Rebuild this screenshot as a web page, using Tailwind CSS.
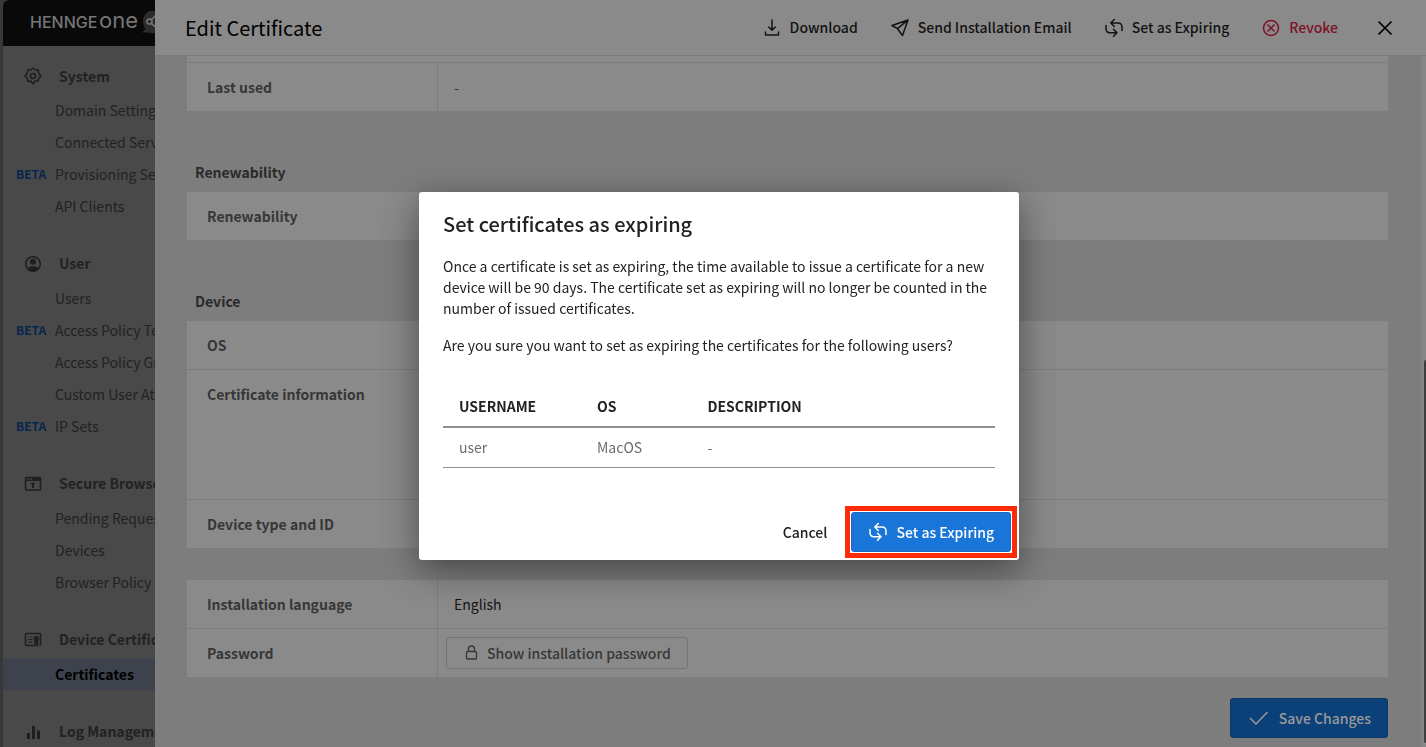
<!DOCTYPE html>
<html lang="en">
<head>
<meta charset="utf-8">
<title>Edit Certificate</title>
<script src="https://cdn.jsdelivr.net/npm/@tailwindcss/browser@4"></script>
</head>
<body class="h-screen overflow-hidden bg-[#383838] font-['Noto_Sans_CJK_JP','Noto_Sans',sans-serif] text-sm leading-[21px] text-[#131313]">
<svg class="hidden">
  <symbol id="swap" viewBox="0 0 20 20"><path d="M2 7.500v3.500a3.700 3.700 0 0 0 3.700 3.700H12.700M9.500 11.200l3.500 3.500-3.500 3.500M18 12.500V8.700a3.700 3.700 0 0 0-3.700-3.700H7M10.300 1.500 6.800 5l3.500 3.500" fill="none" stroke="currentColor" stroke-width="1.5" stroke-linecap="round" stroke-linejoin="round"/></symbol>
</svg>
<div class="flex h-full pl-[3px]">
  <aside class="flex w-[152px] shrink-0 flex-col overflow-hidden rounded-tl-md bg-[#494949] whitespace-nowrap">
    <div class="flex h-[46px] shrink-0 items-center bg-[#090909] pl-[27px]">
      <svg class="h-[24px] w-[136px] shrink-0" viewBox="0 0 136 24" aria-label="HENNGE one" role="img">
        <text x="0" y="17" font-family="Inter, sans-serif" font-size="16" font-weight="500" fill="#777">HENNGE</text>
        <text x="69" y="17" font-family="Inter, sans-serif" font-size="22" font-weight="400" fill="#777">one</text>
        <circle cx="125" cy="10.500" r="12" fill="#2c2c2c"/>
        <path d="M112 21.500l5-5 5 5z" fill="#2c2c2c"/>
        <circle cx="119.500" cy="10.500" r="2.600" fill="none" stroke="#777" stroke-width="1.500"/>
        <path d="M121.300 8.500l5-4M121.300 12.500l5 4" stroke="#777" stroke-width="1.500"/>
      </svg>
    </div>
    <nav class="flex flex-col gap-[23px] pt-[12px] text-[#222]">
      <section>
        <h2 class="flex h-9 items-center gap-4 pl-5 font-bold"><svg class="h-5 w-5 shrink-0" viewBox="0 0 20 20" fill="none" stroke="#1f1f1f" stroke-width="1.500" stroke-linejoin="round"><path d="M10 2l2.300 2 3-.3.300 3L18 10l-2.400 2.300-.3 3-3-.3L10 18l-2.300-3-3 .3-.3-3L2 10l2.400-3.300.3-3 3 .3z"/><circle cx="10" cy="10" r="2.500"/></svg>System</h2>
        <a href="#" class="flex h-8 items-center pl-[52px]">Domain Settings</a>
        <a href="#" class="flex h-8 items-center pl-[52px]">Connected Services</a>
        <a href="#" class="flex h-8 items-center pl-[13px]"><span class="w-[39px] shrink-0 text-xs font-bold text-[#06264b]">BETA</span>Provisioning Settings</a>
        <a href="#" class="flex h-8 items-center pl-[52px]">API Clients</a>
      </section>
      <section>
        <h2 class="flex h-[37px] items-center gap-4 pl-5 font-bold"><svg class="h-5 w-5 shrink-0" viewBox="0 0 20 20"><circle cx="10" cy="10" r="7.300" fill="none" stroke="#1f1f1f" stroke-width="1.500"/><circle cx="10" cy="7.800" r="3" fill="#1f1f1f"/><path d="M4 14.500c1.500-1.700 3.500-2.300 6-2.300s4.500.6 6 2.300c-1.500 2-3.500 3-6 3s-4.500-1-6-3z" fill="#1f1f1f"/></svg>User</h2>
        <a href="#" class="flex h-8 items-center pl-[52px]">Users</a>
        <a href="#" class="flex h-8 items-center pl-[13px]"><span class="w-[39px] shrink-0 text-xs font-bold text-[#06264b]">BETA</span>Access Policy Templates</a>
        <a href="#" class="flex h-8 items-center pl-[52px]">Access Policy Groups</a>
        <a href="#" class="flex h-8 items-center pl-[52px]">Custom User Attributes</a>
        <a href="#" class="flex h-8 items-center pl-[13px]"><span class="w-[39px] shrink-0 text-xs font-bold text-[#06264b]">BETA</span>IP Sets</a>
      </section>
      <section>
        <h2 class="flex h-[37px] items-center gap-4 pl-5 font-bold"><svg class="h-5 w-5 shrink-0" viewBox="0 0 20 20"><rect x="2.500" y="3.500" width="15" height="12.500" rx="1" fill="none" stroke="#1f1f1f" stroke-width="1.500"/><path d="M2 3h16v4H2zM7.500 8.700h5L11 11v3H9v-3z" fill="#1f1f1f"/><path d="M3.500 5h1.200m1 0h1.200m1 0h1.200" stroke="#666" stroke-width="1"/></svg>Secure Browser</h2>
        <a href="#" class="flex h-8 items-center pl-[52px]">Pending Requests</a>
        <a href="#" class="flex h-8 items-center pl-[52px]">Devices</a>
        <a href="#" class="flex h-8 items-center pl-[52px]">Browser Policy</a>
      </section>
      <section>
        <h2 class="flex h-[37px] items-center gap-4 pl-5 font-bold"><svg class="h-5 w-5 shrink-0" viewBox="0 0 20 20" fill="none" stroke="#1f1f1f" stroke-width="1.500"><path d="M11.500 15.500h-8a1 1 0 0 1-1-1V4.500a1 1 0 0 1 1-1h13a1 1 0 0 1 1 1v10a1 1 0 0 1-1 1"/><path d="M5 7h1m1 0h2.500M5 9.500h4.500M5 12h4.500" stroke-width="1.200"/><circle cx="13.300" cy="8.800" r="2.700" fill="#1f1f1f" stroke="none"/><path d="M11.300 11h4v6l-2-1.500-2 1.500z" fill="#1f1f1f" stroke="none"/></svg>Device Certificates</h2>
        <a href="#" aria-current="page" class="flex h-8 items-center bg-[#3e424c] pl-[52px] font-bold text-black">Certificates</a>
      </section>
      <section>
        <h2 class="flex h-[37px] items-center gap-4 pl-5 font-bold"><svg class="h-5 w-5 shrink-0" viewBox="0 0 20 20" fill="#1f1f1f"><path d="M4 11h3v6H4zM9 4h3v13H9zM14 8.500h3V17h-3z"/></svg>Log Management</h2>
      </section>
    </nav>
  </aside>

  <main class="flex min-w-0 flex-1 flex-col bg-[#7d7d7d]">
    <header class="flex h-14 shrink-0 items-center gap-8 border-b border-[#7a7a7a] bg-[#8a8a8a] pr-[31px] pl-[30px] font-medium">
      <h1 class="mr-auto text-xl leading-7 font-normal text-black">Edit Certificate</h1>
      <button type="button" class="flex items-center gap-2"><svg class="h-5 w-5" viewBox="0 0 20 20" fill="none" stroke="currentColor" stroke-width="1.500" stroke-linecap="round" stroke-linejoin="round"><path d="M10 2v10M6.700 9 10 12.300 13.300 9M3.500 14v3h13v-3"/></svg>Download</button>
      <button type="button" class="flex items-center gap-2"><svg class="h-5 w-5" viewBox="0 0 20 20" fill="none" stroke="currentColor" stroke-width="1.500" stroke-linejoin="round"><path d="M18 2 2 7.500l5.500 3.200L12.500 17.500zM18 2 7.500 10.700"/></svg>Send Installation Email</button>
      <button type="button" class="flex items-center gap-2"><svg class="h-5 w-5"><use href="#swap"/></svg>Set as Expiring</button>
      <button type="button" class="flex items-center gap-2 text-[#7d1128]"><svg class="h-5 w-5" viewBox="0 0 20 20" fill="none" stroke="currentColor" stroke-width="1.500"><circle cx="10" cy="10" r="7.500"/><path d="m6.500 6.500 7 7m0-7-7 7"/></svg>Revoke</button>
      <button type="button" aria-label="Close" class="ml-[5px] text-black"><svg class="h-5 w-5" viewBox="0 0 20 20" fill="none" stroke="currentColor" stroke-width="1.700"><path d="m3.500 3.500 13 13m0-13-13 13"/></svg></button>
    </header>
    <div class="flex min-h-0 flex-1">
      <div class="min-w-0 flex-1 pr-[33px] pl-8 text-[#373737]">
        <dl class="bg-[#8a8a8a] pt-1.5">
          <div class="flex h-[49px] border-t border-[#7c7c7c]"><dt class="flex w-[251px] items-center border-r border-[#7c7c7c] pl-5 font-bold">Last used</dt><dd class="flex items-center pl-4">-</dd></div>
        </dl>
        <h2 class="mt-[51px] mb-[9px] pl-2 font-bold text-[#2a2a2a]">Renewability</h2>
        <dl class="bg-[#8a8a8a]">
          <div class="flex h-12"><dt class="flex w-[251px] items-center border-r border-[#7c7c7c] pl-5 font-bold">Renewability</dt><dd></dd></div>
        </dl>
        <h2 class="mt-[51px] mb-[9px] pl-2 font-bold text-[#2a2a2a]">Device</h2>
        <dl class="divide-y divide-[#7c7c7c] bg-[#8a8a8a]">
          <div class="flex h-[49px]"><dt class="flex w-[251px] items-center border-r border-[#7c7c7c] pl-5 font-bold">OS</dt><dd></dd></div>
          <div class="flex h-[130px]"><dt class="w-[251px] border-r border-[#7c7c7c] pt-3.5 pl-5 font-bold">Certificate information</dt><dd></dd></div>
          <div class="flex h-12"><dt class="flex w-[251px] items-center border-r border-[#7c7c7c] pl-5 font-bold">Device type and ID</dt><dd></dd></div>
        </dl>
        <dl class="mt-8 divide-y divide-[#7c7c7c] bg-[#8a8a8a]">
          <div class="flex h-[49px]"><dt class="flex w-[251px] items-center border-r border-[#7c7c7c] pl-5 font-bold">Installation language</dt><dd class="flex items-center pl-4 text-[#131313]">English</dd></div>
          <div class="flex h-12"><dt class="flex w-[251px] items-center border-r border-[#7c7c7c] pl-5 font-bold">Password</dt><dd class="flex items-center pl-2"><button type="button" class="flex h-8 items-center gap-1.5 rounded-[3px] border border-[#747474] px-4 font-medium"><svg class="h-[18px] w-[18px]" viewBox="0 0 18 18" fill="none" stroke="currentColor" stroke-width="1.300"><rect x="3.500" y="7.500" width="10" height="7.500" rx="1"/><path d="M5.500 7.500V5a3 3 0 0 1 6 0v2.500"/></svg>Show installation password</button></dd></div>
        </dl>
        <div class="mt-[21px] flex justify-end"><button type="button" class="flex h-10 items-center gap-2 rounded-[3px] border border-[#0a3765] bg-[#0b4078] px-4 font-medium text-[#9a9a9a]"><svg class="h-6 w-6" viewBox="0 0 24 24" fill="none" stroke="currentColor" stroke-width="1.500"><path d="m3 12 6 6L20.500 6"/></svg>Save Changes</button></div>
      </div>
      <div class="flex w-[5px] flex-col items-end bg-[#878787] pb-1"><div class="mt-auto h-[383px] w-0.5 rounded-l-sm bg-[#3e3e3e]"></div></div>
    </div>
  </main>
</div>

<div class="fixed inset-0 flex items-center justify-center pt-[5px] pl-3">
  <div role="dialog" aria-modal="true" aria-labelledby="dialog-title" class="w-[600px] rounded-[3px] bg-white pt-[18px] pb-2 text-[#222] shadow-[0_10px_36px_rgba(0,0,0,0.45)]">
    <div class="px-6">
      <h2 id="dialog-title" class="text-xl leading-7 font-medium">Set certificates as expiring</h2>
      <p class="mt-[18px]">Once a certificate is set as expiring, the time available to issue a certificate for a new device will be 90 days. The certificate set as expiring will no longer be counted in the number of issued certificates.</p>
      <p class="mt-4">Are you sure you want to set as expiring the certificates for the following users?</p>
      <table class="mt-8 w-full table-fixed border-collapse text-left">
        <thead><tr class="h-[39px] border-b-2 border-[#909090]"><th class="w-1/4 px-4 font-bold">USERNAME</th><th class="w-1/5 px-4 font-bold">OS</th><th class="px-4 font-bold">DESCRIPTION</th></tr></thead>
        <tbody><tr class="h-[41px] border-b border-[#909090] text-[#6c6c6c]"><td class="px-4">user</td><td class="px-4">MacOS</td><td class="px-4">-</td></tr></tbody>
      </table>
    </div>
    <div class="mt-11 flex items-center justify-end gap-2 pr-2 font-medium">
      <button type="button" class="h-10 px-4">Cancel</button>
      <div class="relative">
        <button type="button" class="flex h-10 items-center gap-2 rounded-[3px] border border-[#1668c0] bg-[#1976d8] px-4 text-white"><svg class="h-5 w-5"><use href="#swap"/></svg>Set as Expiring</button>
        <div class="pointer-events-none absolute -inset-1.5 border-[5px] border-[#ff2a08]"></div>
      </div>
    </div>
  </div>
</div>
</body>
</html>
